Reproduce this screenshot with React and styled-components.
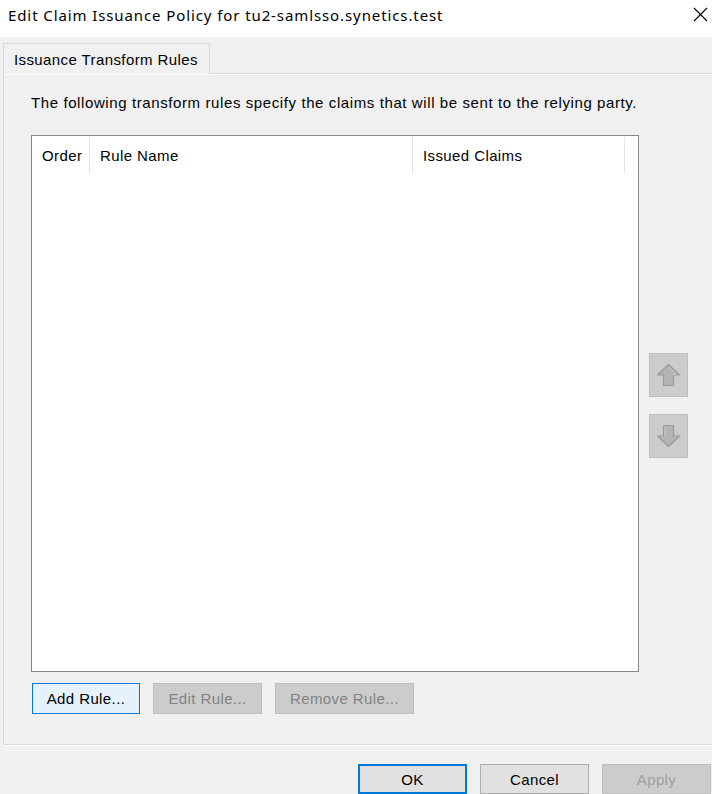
import React from 'react';
import styled, { createGlobalStyle } from 'styled-components';

const GlobalStyle = createGlobalStyle`
  html, body {
    margin: 0;
    padding: 0;
    background: #f0f0f0;
  }
  * {
    box-sizing: border-box;
  }
`;

const Window = styled.div`
  width: 712px;
  height: 794px;
  display: flex;
  flex-direction: column;
  overflow: hidden;
  background: #f0f0f0;
  font-family: "Liberation Sans", Arial, sans-serif;
  font-size: 15px;
  letter-spacing: 0.4px;
  color: #000;
`;

const TitleBar = styled.div`
  height: 37px;
  flex: none;
  display: flex;
  align-items: center;
  justify-content: space-between;
  padding: 0 8px 8px 8px;
  background: #fff;
`;

const Title = styled.div`
  font-family: "Noto Sans", "Liberation Sans", sans-serif;
  font-size: 15px;
  letter-spacing: 0.9px;
  color: #000;
`;

const CloseButton = styled.div`
  width: 16px;
  height: 16px;
  display: flex;
  align-items: center;
  justify-content: center;
  margin-right: -4px;
`;

const Body = styled.div`
  flex: 1;
  display: flex;
  flex-direction: column;
  padding: 6px 0 0 3px;
`;

const TabStrip = styled.div`
  display: flex;
  height: 30px;
  flex: none;
`;

const Tab = styled.div`
  width: 207px;
  height: 31px;
  border: 1px solid #d9d9d9;
  border-bottom: none;
  background: #f0f0f0;
  display: flex;
  align-items: center;
  padding-left: 10px;
  position: relative;
  z-index: 1;
`;

const TabPage = styled.div`
  height: 672px;
  margin-right: -10px;
  border: 1px solid #d9d9d9;
  box-shadow: inset 0 1px 0 #fff, 0 1px 0 #fff;
  display: flex;
  flex-direction: column;
  padding: 18px 0 0 27px;
`;

const Description = styled.div`
  height: 22px;
  line-height: 22px;
  letter-spacing: 0.6px;
  white-space: nowrap;
`;

const ListRow = styled.div`
  display: flex;
  align-items: center;
  margin-top: 21px;
`;

const ListBox = styled.div`
  width: 608px;
  height: 537px;
  border: 1px solid #828790;
  background: #fff;
  flex: none;
`;

const Header = styled.div`
  display: flex;
  height: 38px;
`;

const HeaderCell = styled.div`
  width: ${(p) => p.$width}px;
  height: 100%;
  display: flex;
  align-items: center;
  padding-left: 10px;
  padding-bottom: 1px;
  border-right: 1px solid #e5e5e5;
  border-top: 2px solid #fff;
  background-clip: padding-box;
  white-space: nowrap;
`;

const SideButtons = styled.div`
  display: flex;
  flex-direction: column;
  gap: 17px;
  margin-left: 10px;
  padding-top: 3px;
`;

const ArrowButton = styled.div`
  width: 39px;
  height: 44px;
  background: #cccccc;
  border: 1px solid #bfbfbf;
  display: flex;
  align-items: center;
  justify-content: center;
`;

const ActionRow = styled.div`
  display: flex;
  gap: 13px;
  margin-top: 11px;
  padding-left: 1px;
`;

const Button = styled.div`
  width: ${(p) => p.$width || 109}px;
  height: ${(p) => p.$height || 31}px;
  display: flex;
  align-items: center;
  justify-content: center;
  background: ${(p) => (p.$disabled ? '#cccccc' : p.$accent ? '#e5f1fb' : '#e1e1e1')};
  border: ${(p) => (p.$default ? '2px' : '1px')} solid
    ${(p) => (p.$disabled ? '#bfbfbf' : p.$accent || p.$default ? '#0078d7' : '#adadad')};
  color: ${(p) => (p.$disabled ? p.$dim || '#838383' : '#000')};
  white-space: nowrap;
`;

const Footer = styled.div`
  display: flex;
  justify-content: flex-end;
  gap: 13px;
  padding-top: 19px;
  padding-right: 1px;
`;

const UpArrow = () => (
  <svg width="25" height="24" viewBox="0 0 25 24">
    <path
      d="M12.5 1.5 L23.5 12 L17.5 12 L17.5 22.5 L7.5 22.5 L7.5 12 L1.5 12 Z"
      fill="#b4b4b4"
      stroke="#9a9a9a"
      strokeWidth="1.2"
      strokeLinejoin="round"
    />
    <path d="M12.5 4 L20 11 L16 11" fill="none" stroke="#c8c8c8" strokeWidth="1" />
  </svg>
);

const DownArrow = () => (
  <svg width="25" height="24" viewBox="0 0 25 24">
    <path
      d="M12.5 22.5 L23.5 12 L17.5 12 L17.5 1.5 L7.5 1.5 L7.5 12 L1.5 12 Z"
      fill="#b4b4b4"
      stroke="#9a9a9a"
      strokeWidth="1.2"
      strokeLinejoin="round"
    />
    <path d="M9 3 L9 13" fill="none" stroke="#c8c8c8" strokeWidth="1" />
  </svg>
);

const CloseIcon = () => (
  <svg width="15" height="15" viewBox="0 0 15 15">
    <path d="M1 1 L14 14 M14 1 L1 14" stroke="#000" strokeWidth="1.1" />
  </svg>
);

const App = () => {
  return (
    <Window>
      <GlobalStyle />
      <TitleBar>
        <Title>Edit Claim Issuance Policy for tu2-samlsso.synetics.test</Title>
        <CloseButton>
          <CloseIcon />
        </CloseButton>
      </TitleBar>
      <Body>
        <TabStrip>
          <Tab>Issuance Transform Rules</Tab>
        </TabStrip>
        <TabPage>
          <Description>
            The following transform rules specify the claims that will be sent to the relying party.
          </Description>
          <ListRow>
            <ListBox>
              <Header>
                <HeaderCell $width={58}>Order</HeaderCell>
                <HeaderCell $width={323}>Rule Name</HeaderCell>
                <HeaderCell $width={212}>Issued Claims</HeaderCell>
              </Header>
            </ListBox>
            <SideButtons>
              <ArrowButton>
                <UpArrow />
              </ArrowButton>
              <ArrowButton>
                <DownArrow />
              </ArrowButton>
            </SideButtons>
          </ListRow>
          <ActionRow>
            <Button $accent $width={108}>Add Rule...</Button>
            <Button $disabled $width={109}>Edit Rule...</Button>
            <Button $disabled $width={139}>Remove Rule...</Button>
          </ActionRow>
        </TabPage>
        <Footer>
          <Button $default $height={30}>OK</Button>
          <Button $height={30}>Cancel</Button>
          <Button $disabled $dim="#a0a0a0" $height={30}>Apply</Button>
        </Footer>
      </Body>
    </Window>
  );
};

export default App;
